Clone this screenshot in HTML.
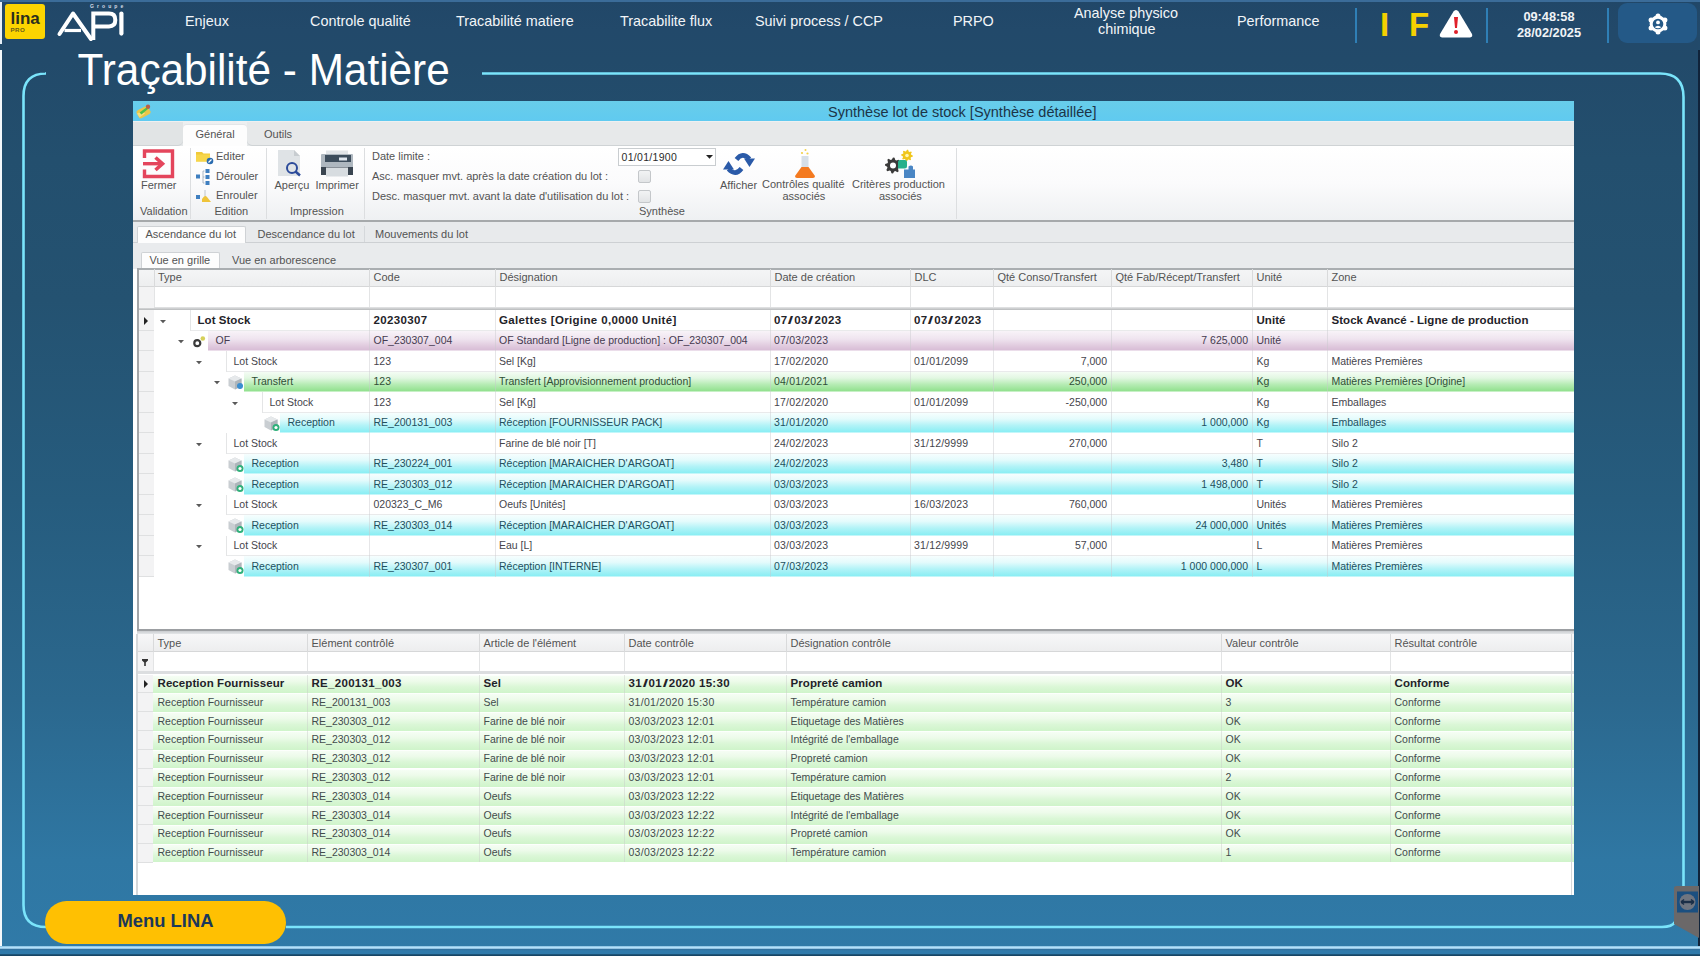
<!DOCTYPE html>
<html><head><meta charset="utf-8">
<style>
*{margin:0;padding:0;box-sizing:border-box}
html,body{width:1700px;height:956px;overflow:hidden}
body{position:relative;font-family:"Liberation Sans",sans-serif;background:linear-gradient(180deg,rgb(33,71,104) 0px,rgb(34,73,106) 30px,rgb(34,74,106) 60px,rgb(35,79,110) 160px,rgb(36,82,113) 300px,rgb(38,92,126) 500px,rgb(43,104,142) 700px,rgb(47,119,163) 860px,rgb(48,122,168) 956px)}
.a{position:absolute;white-space:nowrap}
.nav{color:#f2f5f8;font-size:14.4px;line-height:16px}
.sep{position:absolute;top:8px;width:2px;height:35px;background:#2f7fb6}
#win{position:absolute;left:133px;top:101px;width:1441px;height:793px;background:#fff;overflow:hidden}
.rb{font-size:11px;color:#3c3c3c;line-height:13px}
.hdr{font-size:11px;color:#3a3a3a;line-height:13px}
.c{font-size:10.5px;color:#2e2e2e;line-height:13px}
.b{font-size:11.5px;font-weight:bold;color:#262626;line-height:13px}
</style></head>
<body>
<!-- left white strip -->
<div class="a" style="left:0;top:0;width:2px;height:44px;background:#e8f0f8"></div>
<div class="a" style="left:0;top:50px;width:2px;height:897px;background:#f4f8fb"></div>
<!-- top light strip -->
<div class="a" style="left:0;top:0;width:1700px;height:2px;background:#3b6c99"></div>
<!-- right dark edge -->
<div class="a" style="left:1698px;top:50px;width:2px;height:906px;background:#10233a"></div>

<!-- lina logo -->
<div class="a" style="left:5px;top:4px;width:40px;height:35px;background:#fcd400;border-radius:3px"></div>
<div class="a" style="left:10.5px;top:10px;font-size:17px;font-weight:bold;color:#2b2e1e;line-height:17px">lina</div>
<div class="a" style="left:10.5px;top:26.5px;font-size:6.2px;font-weight:bold;color:#6b5f1a;line-height:6px;letter-spacing:0.4px">PRO</div>
<!-- API logo -->
<div class="a" style="left:90px;top:3px;font-size:5px;font-weight:bold;color:#d5dde6;letter-spacing:3.1px;line-height:6px">Groupe</div>
<svg class="a" style="left:0;top:0" width="130" height="48" viewBox="0 0 130 48">
 <path d="M59.5 34 L73 13.5 L91 39" fill="none" stroke="#fff" stroke-width="4" stroke-linejoin="round" stroke-linecap="round"/>
 <path d="M64.5 30.5 L81 30.5" fill="none" stroke="#fff" stroke-width="3.2"/>
 <path d="M93.3 40 L93.3 13.6 L109 13.6 Q115.3 13.6 115.3 20 Q115.3 26.4 109 26.4 L95 26.4" fill="none" stroke="#fff" stroke-width="4"/>
 <path d="M121.4 13.6 L121.4 33.6" fill="none" stroke="#fff" stroke-width="4.2" stroke-linecap="round"/>
</svg>

<!-- nav items -->
<div class="a nav" style="left:185px;top:13px">Enjeux</div>
<div class="a nav" style="left:310px;top:13px">Controle qualité</div>
<div class="a nav" style="left:456px;top:13px">Tracabilité matiere</div>
<div class="a nav" style="left:620px;top:13px">Tracabilite flux</div>
<div class="a nav" style="left:755px;top:13px">Suivi process / CCP</div>
<div class="a nav" style="left:953px;top:13px">PRPO</div>
<div class="a nav" style="left:1074px;top:5px">Analyse physico</div>
<div class="a nav" style="left:1098px;top:21px">chimique</div>
<div class="a nav" style="left:1237px;top:13px">Performance</div>
<div class="sep" style="left:1355px"></div>
<div class="a" style="left:1380px;top:8px;font-size:33px;font-weight:bold;color:#f5d000;line-height:34px">I</div>
<div class="a" style="left:1409px;top:8px;font-size:33px;font-weight:bold;color:#f5d000;line-height:34px">F</div>
<svg class="a" style="left:1438px;top:8px" width="36" height="31" viewBox="0 0 36 31">
 <path d="M18 2 Q19.5 2 20.5 3.5 L34 26 Q35 29 32 29.5 L4 29.5 Q1 29 2 26 L15.5 3.5 Q16.5 2 18 2Z" fill="#fff"/>
 <path d="M16 9 L20 9 L19 20 L17 20Z" fill="#e0202a"/>
 <circle cx="18" cy="24" r="2" fill="#e0202a"/>
</svg>
<div class="sep" style="left:1486px"></div>
<div class="a" style="left:1517px;top:9px;width:64px;text-align:center;font-size:12.8px;font-weight:bold;color:#f0f3f6;line-height:16px">09:48:58<br>28/02/2025</div>
<div class="sep" style="left:1607px"></div>
<div class="a" style="left:1618px;top:3px;width:79px;height:40px;background:#245987;border-radius:9px"></div>
<svg class="a" style="left:1646.5px;top:13px" width="22" height="22" viewBox="0 0 22 22">
 <circle cx="11" cy="11" r="8.4" fill="#fff"/><circle cx="11.00" cy="3.00" r="2.5" fill="#fff"/><circle cx="17.93" cy="7.00" r="2.5" fill="#fff"/><circle cx="17.93" cy="15.00" r="2.5" fill="#fff"/><circle cx="11.00" cy="19.00" r="2.5" fill="#fff"/><circle cx="4.07" cy="15.00" r="2.5" fill="#fff"/><circle cx="4.07" cy="7.00" r="2.5" fill="#fff"/>
 <circle cx="11" cy="11" r="5.3" fill="#245987"/>
 <circle cx="11" cy="9.4" r="1.9" fill="#fff"/>
 <path d="M7.6 14.3 Q11 11.2 14.4 14.3 Q11 16 7.6 14.3Z" fill="#fff"/>
</svg>

<!-- cyan frame -->
<svg class="a" style="left:0;top:0" width="1700" height="956">
 <path d="M45 73.5 L46 73.5 Q23.5 73.5 23.5 96 L23.5 905 Q23.5 927 46 927" fill="none" stroke="#7ae4fb" stroke-width="2.6"/>
 <path d="M482 73.5 L1660 73.5 Q1683.5 73.5 1683.5 97 L1683.5 886" fill="none" stroke="#7ae4fb" stroke-width="2.6"/>
 <path d="M286 927 L1662 927 Q1672 927 1675 922" fill="none" stroke="#7ae4fb" stroke-width="2.6"/>
</svg>

<!-- title -->
<div class="a" style="left:77.5px;top:47px;font-size:42.3px;color:#fff;line-height:48px;transform:scaleY(1.035);transform-origin:0 38px">Traçabilité - Matière</div>

<div class="a" style="left:133px;top:101px;width:1441px;height:793.5px;background:#fff;"></div>
<div class="a" style="left:133px;top:101px;width:1441px;height:20px;background:linear-gradient(180deg,#68cdea,#60caf0);"></div>
<svg class="a" style="left:135px;top:103px" width="17" height="17" viewBox="0 0 17 17">
<path d="M1.5 10 Q1 8 3 7 L10 3.5 Q12 3 13 4.5 L15.5 8.5 Q16 10 14.5 11 L7 15 Q5 16 4 14.5Z" fill="#e9c648"/>
<path d="M2 10.5 L7.5 8 L10 10.5 L4.5 14.5Z" fill="#f6de7a"/>
<path d="M4.5 9.5 L11.5 4.5 L13 6 L6.5 11.5Z" fill="#4cc04a"/>
<circle cx="13" cy="3.8" r="2.2" fill="#b86048"/>
</svg>
<div class="a" style="left:828px;top:104.53px;font-size:14.5px;line-height:14.5px;color:#1c3447;">Synthèse lot de stock [Synthèse détaillée]</div>
<div class="a" style="left:133px;top:121px;width:1441px;height:25px;background:linear-gradient(180deg,#eef0f1,#e5e8e9);"></div>
<div class="a" style="left:133px;top:122px;width:50px;height:23px;background:#e1e4e5;border-radius:0 0 5px 0;box-shadow:0 1px 0 #cfd3d5"></div>
<div class="a" style="left:247px;top:122px;width:1327px;height:23px;background:#e7e9ea;border-radius:0 0 0 5px;box-shadow:0 1px 0 #cfd3d5"></div>
<div class="a" style="left:183px;top:125px;width:64px;height:22px;background:#fdfdfd;border-radius:4px 4px 0 0;box-shadow:0 -1px 0 #e4e6e8"></div>
<div class="a" style="left:195.5px;top:129.19px;font-size:11px;line-height:11px;color:#535353;">Général</div>
<div class="a" style="left:264px;top:129.19px;font-size:11px;line-height:11px;color:#535353;">Outils</div>
<div class="a" style="left:133px;top:146px;width:1441px;height:75px;background:linear-gradient(180deg,#ffffff 0%,#fbfbfc 50%,#eef0f2 100%);"></div>
<div class="a" style="left:133px;top:220px;width:1441px;height:2px;background:#a6a9ab;"></div>
<div class="a" style="left:190px;top:148px;width:1px;height:71px;background:#dcdee0;"></div>
<div class="a" style="left:266px;top:148px;width:1px;height:71px;background:#dcdee0;"></div>
<div class="a" style="left:364px;top:148px;width:1px;height:71px;background:#dcdee0;"></div>
<div class="a" style="left:956px;top:148px;width:1px;height:71px;background:#dcdee0;"></div>
<svg class="a" style="left:142px;top:149px" width="33" height="30" viewBox="0 0 33 30">
<path d="M2.5 9 L2.5 2 L30.5 2 L30.5 27.5 L2.5 27.5 L2.5 20.5" fill="none" stroke="#e4455c" stroke-width="3.4"/>
<path d="M1 14.7 L19 14.7" stroke="#e4455c" stroke-width="3.4"/>
<path d="M13.5 8.5 L20.5 14.7 L13.5 21" fill="none" stroke="#e4455c" stroke-width="3.6"/>
</svg>
<div class="a" style="left:141px;top:180.19px;font-size:11px;line-height:11px;color:#535353;">Fermer</div>
<div class="a" style="left:140px;top:205.99px;font-size:11px;line-height:11px;color:#535353;">Validation</div>
<svg class="a" style="left:195px;top:150px" width="20" height="15" viewBox="0 0 20 15">
<path d="M1 2 L7 2 L8.5 3.5 L15 3.5 L15 11.5 L1 11.5Z" fill="#f0c93a"/>
<path d="M1 4.5 L15 4.5 L15 11.5 L1 11.5Z" fill="#f7d64a"/>
<circle cx="15" cy="11" r="3.3" fill="#2a6cb0"/>
<path d="M13.5 12.5 L16.5 9.5" stroke="#fff" stroke-width="1.2"/>
</svg>
<div class="a" style="left:216px;top:150.69px;font-size:11px;line-height:11px;color:#535353;">Editer</div>
<svg class="a" style="left:195px;top:168px" width="20" height="18" viewBox="0 0 20 18">
<rect x="1" y="6.5" width="4" height="4" fill="#3f7fc0"/>
<path d="M9.5 3 L8 3 L8 15 L9.5 15 M8 9 L9.5 9" fill="none" stroke="#9aa8b8" stroke-width="0.8"/>
<rect x="10.5" y="1" width="4" height="4" fill="#3f7fc0"/>
<rect x="10.5" y="7" width="4" height="4" fill="#3f7fc0"/>
<rect x="10.5" y="13" width="4" height="4" fill="#3f7fc0"/>
</svg>
<div class="a" style="left:216px;top:170.69px;font-size:11px;line-height:11px;color:#535353;">Dérouler</div>
<svg class="a" style="left:195px;top:189px" width="20" height="16" viewBox="0 0 20 16">
<rect x="1" y="6" width="4" height="4" fill="#3f7fc0"/>
<path d="M10 1 L10 8" stroke="#b0b8c0" stroke-width="0.8"/>
<path d="M7 10 Q10 5 12 8 L16 13 L7 13Z" fill="#efc43a"/>
</svg>
<div class="a" style="left:216px;top:189.99px;font-size:11px;line-height:11px;color:#535353;">Enrouler</div>
<div class="a" style="left:214.5px;top:205.69px;font-size:11px;line-height:11px;color:#535353;">Edition</div>
<svg class="a" style="left:276px;top:149px" width="28" height="30" viewBox="0 0 28 30">
<path d="M2 1 L18 1 L24 7 L24 27 L2 27Z" fill="#dfe3e6"/>
<path d="M18 1 L24 7 L18 7Z" fill="#c7ccd0"/>
<circle cx="16" cy="19" r="5" fill="none" stroke="#2b4a9a" stroke-width="2"/>
<path d="M19.5 22.5 L24 26.5" stroke="#2b4a9a" stroke-width="2.4"/>
</svg>
<svg class="a" style="left:320px;top:150px" width="34" height="28" viewBox="0 0 34 28">
<rect x="6" y="0.5" width="22" height="5" fill="#e2e5e8"/>
<rect x="1" y="4" width="32" height="19" rx="1" fill="#aeb7bf"/>
<rect x="5" y="5" width="26" height="7" fill="#3d4d5c"/>
<rect x="19" y="7.5" width="8" height="3" fill="#dfe6ee"/>
<rect x="1" y="17" width="32" height="8" fill="#3a4550"/>
<rect x="6" y="17.5" width="22" height="9" fill="#d7dce0"/>
</svg>
<div class="a" style="left:274.5px;top:180.09px;font-size:11px;line-height:11px;color:#535353;">Aperçu</div>
<div class="a" style="left:315.5px;top:180.09px;font-size:11px;line-height:11px;color:#535353;">Imprimer</div>
<div class="a" style="left:290px;top:205.69px;font-size:11px;line-height:11px;color:#535353;">Impression</div>
<div class="a" style="left:372px;top:151.19px;font-size:11px;line-height:11px;color:#535353;">Date limite :</div>
<div class="a" style="left:372px;top:170.69px;font-size:11px;line-height:11px;color:#535353;">Asc. masquer mvt. après la date création du lot :</div>
<div class="a" style="left:372px;top:190.69px;font-size:11px;line-height:11px;color:#535353;">Desc. masquer mvt. avant la date d'utilisation du lot :</div>
<div class="a" style="left:618px;top:148px;width:98px;height:18px;background:#fff;border:1px solid #c9cdd0"></div>
<div class="a" style="left:621.5px;top:151.61px;font-size:10.5px;line-height:10.5px;color:#2a2a2a;letter-spacing:0.3px;">01/01/1900</div>
<svg class="a" style="left:705.5px;top:155px" width="7" height="4" viewBox="0 0 7 4"><path d="M0 0 L7 0 L3.5 3.8Z" fill="#222"/></svg>
<div class="a" style="left:638px;top:170px;width:13px;height:13px;background:linear-gradient(180deg,#f2f3f4,#e2e4e6);border:1px solid #c4c7ca;border-radius:2px"></div>
<div class="a" style="left:638px;top:190px;width:13px;height:13px;background:linear-gradient(180deg,#f2f3f4,#e2e4e6);border:1px solid #c4c7ca;border-radius:2px"></div>
<div class="a" style="left:639px;top:206.29px;font-size:11px;line-height:11px;color:#535353;">Synthèse</div>
<svg class="a" style="left:723px;top:151px" width="32" height="26" viewBox="0 0 32 26">
<path d="M13.5 8.5 Q19.5 0.5 26.5 8" fill="none" stroke="#2a5aa8" stroke-width="4.6"/>
<path d="M21 7.5 L32 7.5 L26.5 16Z" fill="#2a5aa8"/>
<path d="M18.5 17.5 Q12.5 25.5 5.5 18" fill="none" stroke="#2a5aa8" stroke-width="4.6"/>
<path d="M0 18.5 L11 18.5 L5.5 10Z" fill="#2a5aa8"/>
</svg>
<div class="a" style="left:720px;top:180.39px;font-size:11px;line-height:11px;color:#535353;">Afficher</div>
<svg class="a" style="left:793px;top:148px" width="24" height="31" viewBox="0 0 24 31">
<circle cx="12.5" cy="2" r="1" fill="#f2d24a"/><circle cx="9" cy="5" r="1.1" fill="#f2d24a"/><circle cx="14.5" cy="5.5" r="1.1" fill="#f2d24a"/>
<rect x="8.5" y="8" width="7" height="13" fill="#d6dfe8"/>
<path d="M8.5 19 L15.5 19 L22 28 Q22 30 20 30 L4 30 Q2 30 2 28Z" fill="#f47a20"/>
</svg>
<div class="a" style="left:762px;top:179.49px;font-size:11px;line-height:11px;color:#535353;">Contrôles qualité</div>
<div class="a" style="left:782.5px;top:190.99px;font-size:11px;line-height:11px;color:#535353;">associés</div>
<svg class="a" style="left:884px;top:149px" width="34" height="30" viewBox="0 0 34 30">
<polygon points="17.00,16.50 16.85,18.06 14.54,18.80 13.99,19.83 14.66,22.16 13.44,23.15 11.30,22.04 10.17,22.38 9.00,24.50 7.44,24.35 6.70,22.04 5.67,21.49 3.34,22.16 2.35,20.94 3.46,18.80 3.12,17.67 1.00,16.50 1.15,14.94 3.46,14.20 4.01,13.17 3.34,10.84 4.56,9.85 6.70,10.96 7.83,10.62 9.00,8.50 10.56,8.65 11.30,10.96 12.33,11.51 14.66,10.84 15.65,12.06 14.54,14.20 14.88,15.33" fill="#3a3a3a"/><circle cx="9" cy="16.5" r="3" fill="#fff"/>
<polygon points="28.80,6.50 28.69,7.63 26.97,8.15 26.58,8.89 27.10,10.60 26.22,11.32 24.65,10.47 23.84,10.72 23.00,12.30 21.87,12.19 21.35,10.47 20.61,10.08 18.90,10.60 18.18,9.72 19.03,8.15 18.78,7.34 17.20,6.50 17.31,5.37 19.03,4.85 19.42,4.11 18.90,2.40 19.78,1.68 21.35,2.53 22.16,2.28 23.00,0.70 24.13,0.81 24.65,2.53 25.39,2.92 27.10,2.40 27.82,3.28 26.97,4.85 27.22,5.66" fill="#f0c61c"/><circle cx="23" cy="6.5" r="1.8" fill="#fff6b0"/>
<path d="M14 12.5 Q14 11 16 11 L21 11 Q23 11 23 13 L23 17 Q23 19.5 20.5 19.5 L14 19.5Z" fill="#27b08a"/>
<path d="M20 20.5 L24.5 20.5 L24.5 17.5 Q27 15.5 29 17.5 L29 20.5 L31 20.5 L31 29 L20 29Z" fill="#4a86c4"/>
</svg>
<div class="a" style="left:852px;top:179.49px;font-size:11px;line-height:11px;color:#535353;">Critères production</div>
<div class="a" style="left:879px;top:190.99px;font-size:11px;line-height:11px;color:#535353;">associés</div>
<div class="a" style="left:133px;top:222px;width:1441px;height:21px;background:#e8eaec;"></div>
<div class="a" style="left:133px;top:242px;width:1441px;height:1px;background:#cdd0d3;"></div>
<div class="a" style="left:137px;top:226px;width:109px;height:17px;background:#fdfdfd;border:1px solid #cfd2d5;border-bottom:none;border-radius:2px 2px 0 0"></div>
<div class="a" style="left:145.5px;top:229.39px;font-size:11px;line-height:11px;color:#535353;">Ascendance du lot</div>
<div class="a" style="left:257.5px;top:229.39px;font-size:11px;line-height:11px;color:#535353;">Descendance du lot</div>
<div class="a" style="left:364px;top:226px;width:1px;height:16px;background:#d5d8db;"></div>
<div class="a" style="left:375px;top:229.39px;font-size:11px;line-height:11px;color:#535353;">Mouvements du lot</div>
<div class="a" style="left:133px;top:243px;width:1441px;height:26px;background:#e9ebed;"></div>
<div class="a" style="left:141px;top:252px;width:79px;height:17px;background:#fdfdfd;border:1px solid #cfd2d5;border-bottom:none;border-radius:2px 2px 0 0"></div>
<div class="a" style="left:149.5px;top:255.09px;font-size:11px;line-height:11px;color:#535353;">Vue en grille</div>
<div class="a" style="left:232px;top:255.09px;font-size:11px;line-height:11px;color:#535353;">Vue en arborescence</div>
<div class="a" style="left:137px;top:268px;width:1437px;height:361px;background:#fff;"></div>
<div class="a" style="left:137px;top:268px;width:1437px;height:2px;background:#aaaeb1;"></div>
<div class="a" style="left:137px;top:268px;width:2px;height:361px;background:#a3a6a9;"></div>
<div class="a" style="left:139px;top:270px;width:1435px;height:17px;background:linear-gradient(180deg,#f4f5f6,#edeeef);"></div>
<div class="a" style="left:139px;top:286px;width:1435px;height:1px;background:#d6d7d8;"></div>
<div class="a" style="left:153.5px;top:269px;width:1px;height:18px;background:#d9dadb;"></div>
<div class="a" style="left:369px;top:269px;width:1px;height:18px;background:#d9dadb;"></div>
<div class="a" style="left:495px;top:269px;width:1px;height:18px;background:#d9dadb;"></div>
<div class="a" style="left:770px;top:269px;width:1px;height:18px;background:#d9dadb;"></div>
<div class="a" style="left:910px;top:269px;width:1px;height:18px;background:#d9dadb;"></div>
<div class="a" style="left:993px;top:269px;width:1px;height:18px;background:#d9dadb;"></div>
<div class="a" style="left:1111px;top:269px;width:1px;height:18px;background:#d9dadb;"></div>
<div class="a" style="left:1252px;top:269px;width:1px;height:18px;background:#d9dadb;"></div>
<div class="a" style="left:1327px;top:269px;width:1px;height:18px;background:#d9dadb;"></div>
<div class="a" style="left:158.0px;top:271.69px;font-size:11px;line-height:11px;color:#535353;">Type</div>
<div class="a" style="left:373.5px;top:271.69px;font-size:11px;line-height:11px;color:#535353;">Code</div>
<div class="a" style="left:499.5px;top:271.69px;font-size:11px;line-height:11px;color:#535353;">Désignation</div>
<div class="a" style="left:774.5px;top:271.69px;font-size:11px;line-height:11px;color:#535353;">Date de création</div>
<div class="a" style="left:914.5px;top:271.69px;font-size:11px;line-height:11px;color:#535353;">DLC</div>
<div class="a" style="left:997.5px;top:271.69px;font-size:11px;line-height:11px;color:#535353;">Qté Conso/Transfert</div>
<div class="a" style="left:1115.5px;top:271.69px;font-size:11px;line-height:11px;color:#535353;">Qté Fab/Récept/Transfert</div>
<div class="a" style="left:1256.5px;top:271.69px;font-size:11px;line-height:11px;color:#535353;">Unité</div>
<div class="a" style="left:1331.5px;top:271.69px;font-size:11px;line-height:11px;color:#535353;">Zone</div>
<div class="a" style="left:153.5px;top:287px;width:1px;height:22px;background:#e3e4e5;"></div>
<div class="a" style="left:369px;top:287px;width:1px;height:22px;background:#e3e4e5;"></div>
<div class="a" style="left:495px;top:287px;width:1px;height:22px;background:#e3e4e5;"></div>
<div class="a" style="left:770px;top:287px;width:1px;height:22px;background:#e3e4e5;"></div>
<div class="a" style="left:910px;top:287px;width:1px;height:22px;background:#e3e4e5;"></div>
<div class="a" style="left:993px;top:287px;width:1px;height:22px;background:#e3e4e5;"></div>
<div class="a" style="left:1111px;top:287px;width:1px;height:22px;background:#e3e4e5;"></div>
<div class="a" style="left:1252px;top:287px;width:1px;height:22px;background:#e3e4e5;"></div>
<div class="a" style="left:1327px;top:287px;width:1px;height:22px;background:#e3e4e5;"></div>
<div class="a" style="left:139px;top:307px;width:1435px;height:3px;background:linear-gradient(180deg,#e6e7e8,#b7b9bb);"></div>
<div class="a" style="left:139px;top:287px;width:14.5px;height:21px;background:#f3f3f4;"></div>
<div class="a" style="left:139px;top:310.0px;width:14.5px;height:20.5px;background:#f3f3f4;"></div>
<div class="a" style="left:139px;top:329.5px;width:14.5px;height:1px;background:#dfe0e1;"></div>
<div class="a" style="left:190px;top:310.0px;width:1384px;height:20.5px;background:#ffffff;"></div>
<div class="a" style="left:190px;top:329.5px;width:1384px;height:1px;background:#e9eaeb;"></div>
<div class="a" style="left:190px;top:310.0px;width:1px;height:20.5px;background:#e4e5e6;"></div>
<div class="a" style="left:369px;top:310.0px;width:1px;height:20.5px;background:rgba(200,200,205,0.45);"></div>
<div class="a" style="left:495px;top:310.0px;width:1px;height:20.5px;background:rgba(200,200,205,0.45);"></div>
<div class="a" style="left:770px;top:310.0px;width:1px;height:20.5px;background:rgba(200,200,205,0.45);"></div>
<div class="a" style="left:910px;top:310.0px;width:1px;height:20.5px;background:rgba(200,200,205,0.45);"></div>
<div class="a" style="left:993px;top:310.0px;width:1px;height:20.5px;background:rgba(200,200,205,0.45);"></div>
<div class="a" style="left:1111px;top:310.0px;width:1px;height:20.5px;background:rgba(200,200,205,0.45);"></div>
<div class="a" style="left:1252px;top:310.0px;width:1px;height:20.5px;background:rgba(200,200,205,0.45);"></div>
<div class="a" style="left:1327px;top:310.0px;width:1px;height:20.5px;background:rgba(200,200,205,0.45);"></div>
<svg class="a" style="left:143px;top:316.5px" width="6" height="8" viewBox="0 0 6 8"><path d="M1 0 L5 4 L1 8Z" fill="#222"/></svg>
<svg class="a" style="left:160px;top:319.5px" width="6" height="4" viewBox="0 0 6 4"><path d="M0 0 L6 0 L3 3.2Z" fill="#5a5a5a"/></svg>
<div class="a" style="left:197.5px;top:315.07px;font-size:11.5px;line-height:11.5px;color:#1f2329;font-weight:700;letter-spacing:0.05px;">Lot Stock</div>
<div class="a" style="left:373.5px;top:315.07px;font-size:11.5px;line-height:11.5px;color:#1f2329;font-weight:700;letter-spacing:0.35px;">20230307</div>
<div class="a" style="left:499px;top:315.07px;font-size:11.5px;line-height:11.5px;color:#1f2329;font-weight:700;letter-spacing:0.35px;">Galettes [Origine 0,0000 Unité]</div>
<div class="a" style="left:774px;top:315.07px;font-size:11.5px;line-height:11.5px;color:#1f2329;font-weight:700;letter-spacing:0.35px;">07<span style="display:inline-block;margin:0 1.6px;transform:scaleX(1.7)">/</span>03<span style="display:inline-block;margin:0 1.6px;transform:scaleX(1.7)">/</span>2023</div>
<div class="a" style="left:914px;top:315.07px;font-size:11.5px;line-height:11.5px;color:#1f2329;font-weight:700;letter-spacing:0.35px;">07<span style="display:inline-block;margin:0 1.6px;transform:scaleX(1.7)">/</span>03<span style="display:inline-block;margin:0 1.6px;transform:scaleX(1.7)">/</span>2023</div>
<div class="a" style="left:1256.5px;top:315.07px;font-size:11.5px;line-height:11.5px;color:#1f2329;font-weight:700;letter-spacing:0.05px;">Unité</div>
<div class="a" style="left:1331.5px;top:315.07px;font-size:11.5px;line-height:11.5px;color:#1f2329;font-weight:700;letter-spacing:0.05px;">Stock Avancé - Ligne de production</div>
<div class="a" style="left:139px;top:330.5px;width:14.5px;height:20.5px;background:#f3f3f4;"></div>
<div class="a" style="left:139px;top:350.0px;width:14.5px;height:1px;background:#dfe0e1;"></div>
<div class="a" style="left:208px;top:330.5px;width:1366px;height:20.5px;background:linear-gradient(180deg,#f8f3f8 0%,#efe4ef 40%,#e0cade 75%,#d6bad4 100%);"></div>
<div class="a" style="left:208px;top:350.0px;width:1366px;height:1px;background:rgba(255,255,255,0.5);"></div>
<div class="a" style="left:369px;top:330.5px;width:1px;height:20.5px;background:rgba(200,200,205,0.45);"></div>
<div class="a" style="left:495px;top:330.5px;width:1px;height:20.5px;background:rgba(200,200,205,0.45);"></div>
<div class="a" style="left:770px;top:330.5px;width:1px;height:20.5px;background:rgba(200,200,205,0.45);"></div>
<div class="a" style="left:910px;top:330.5px;width:1px;height:20.5px;background:rgba(200,200,205,0.45);"></div>
<div class="a" style="left:993px;top:330.5px;width:1px;height:20.5px;background:rgba(200,200,205,0.45);"></div>
<div class="a" style="left:1111px;top:330.5px;width:1px;height:20.5px;background:rgba(200,200,205,0.45);"></div>
<div class="a" style="left:1252px;top:330.5px;width:1px;height:20.5px;background:rgba(200,200,205,0.45);"></div>
<div class="a" style="left:1327px;top:330.5px;width:1px;height:20.5px;background:rgba(200,200,205,0.45);"></div>
<svg class="a" style="left:178px;top:340.0px" width="6" height="4" viewBox="0 0 6 4"><path d="M0 0 L6 0 L3 3.2Z" fill="#5a5a5a"/></svg>
<svg class="a" style="left:192px;top:333.5px" width="16" height="15" viewBox="0 0 16 15">
<circle cx="5.3" cy="9.2" r="3" fill="none" stroke="#3a3a3a" stroke-width="2.2"/>
<circle cx="10.8" cy="4.5" r="2.3" fill="#d6d05a"/></svg>
<div class="a" style="left:215.5px;top:335.41px;font-size:10.5px;line-height:10.5px;color:#453a50;">OF</div>
<div class="a" style="left:373.5px;top:335.41px;font-size:10.5px;line-height:10.5px;color:#453a50;">OF_230307_004</div>
<div class="a" style="left:499px;top:335.41px;font-size:10.5px;line-height:10.5px;color:#453a50;">OF Standard [Ligne de production] : OF_230307_004</div>
<div class="a" style="left:774px;top:335.41px;font-size:10.5px;line-height:10.5px;color:#453a50;letter-spacing:0.18px;">07/03/2023</div>
<div class="a" style="left:1113px;width:135px;text-align:right;top:335.41px;font-size:10.5px;line-height:10.5px;color:#453a50;">7 625,000</div>
<div class="a" style="left:1256.5px;top:335.41px;font-size:10.5px;line-height:10.5px;color:#453a50;">Unité</div>
<div class="a" style="left:139px;top:351.0px;width:14.5px;height:20.5px;background:#f3f3f4;"></div>
<div class="a" style="left:139px;top:370.5px;width:14.5px;height:1px;background:#dfe0e1;"></div>
<div class="a" style="left:226px;top:351.0px;width:1348px;height:20.5px;background:#ffffff;"></div>
<div class="a" style="left:226px;top:370.5px;width:1348px;height:1px;background:#e9eaeb;"></div>
<div class="a" style="left:226px;top:351.0px;width:1px;height:20.5px;background:#e4e5e6;"></div>
<div class="a" style="left:369px;top:351.0px;width:1px;height:20.5px;background:rgba(200,200,205,0.45);"></div>
<div class="a" style="left:495px;top:351.0px;width:1px;height:20.5px;background:rgba(200,200,205,0.45);"></div>
<div class="a" style="left:770px;top:351.0px;width:1px;height:20.5px;background:rgba(200,200,205,0.45);"></div>
<div class="a" style="left:910px;top:351.0px;width:1px;height:20.5px;background:rgba(200,200,205,0.45);"></div>
<div class="a" style="left:993px;top:351.0px;width:1px;height:20.5px;background:rgba(200,200,205,0.45);"></div>
<div class="a" style="left:1111px;top:351.0px;width:1px;height:20.5px;background:rgba(200,200,205,0.45);"></div>
<div class="a" style="left:1252px;top:351.0px;width:1px;height:20.5px;background:rgba(200,200,205,0.45);"></div>
<div class="a" style="left:1327px;top:351.0px;width:1px;height:20.5px;background:rgba(200,200,205,0.45);"></div>
<svg class="a" style="left:196px;top:360.5px" width="6" height="4" viewBox="0 0 6 4"><path d="M0 0 L6 0 L3 3.2Z" fill="#5a5a5a"/></svg>
<div class="a" style="left:233.5px;top:355.91px;font-size:10.5px;line-height:10.5px;color:#45454c;">Lot Stock</div>
<div class="a" style="left:373.5px;top:355.91px;font-size:10.5px;line-height:10.5px;color:#45454c;">123</div>
<div class="a" style="left:499px;top:355.91px;font-size:10.5px;line-height:10.5px;color:#45454c;">Sel [Kg]</div>
<div class="a" style="left:774px;top:355.91px;font-size:10.5px;line-height:10.5px;color:#45454c;letter-spacing:0.18px;">17/02/2020</div>
<div class="a" style="left:914px;top:355.91px;font-size:10.5px;line-height:10.5px;color:#45454c;letter-spacing:0.18px;">01/01/2099</div>
<div class="a" style="left:995px;width:112px;text-align:right;top:355.91px;font-size:10.5px;line-height:10.5px;color:#45454c;">7,000</div>
<div class="a" style="left:1256.5px;top:355.91px;font-size:10.5px;line-height:10.5px;color:#45454c;">Kg</div>
<div class="a" style="left:1331.5px;top:355.91px;font-size:10.5px;line-height:10.5px;color:#45454c;">Matières Premières</div>
<div class="a" style="left:139px;top:371.5px;width:14.5px;height:20.5px;background:#f3f3f4;"></div>
<div class="a" style="left:139px;top:391.0px;width:14.5px;height:1px;background:#dfe0e1;"></div>
<div class="a" style="left:244px;top:371.5px;width:1330px;height:20.5px;background:linear-gradient(180deg,#f4fcf4 0%,#e2f7e2 30%,#b6ecb4 62%,#8cdf89 100%);"></div>
<div class="a" style="left:244px;top:391.0px;width:1330px;height:1px;background:rgba(255,255,255,0.5);"></div>
<div class="a" style="left:369px;top:371.5px;width:1px;height:20.5px;background:rgba(200,200,205,0.45);"></div>
<div class="a" style="left:495px;top:371.5px;width:1px;height:20.5px;background:rgba(200,200,205,0.45);"></div>
<div class="a" style="left:770px;top:371.5px;width:1px;height:20.5px;background:rgba(200,200,205,0.45);"></div>
<div class="a" style="left:910px;top:371.5px;width:1px;height:20.5px;background:rgba(200,200,205,0.45);"></div>
<div class="a" style="left:993px;top:371.5px;width:1px;height:20.5px;background:rgba(200,200,205,0.45);"></div>
<div class="a" style="left:1111px;top:371.5px;width:1px;height:20.5px;background:rgba(200,200,205,0.45);"></div>
<div class="a" style="left:1252px;top:371.5px;width:1px;height:20.5px;background:rgba(200,200,205,0.45);"></div>
<div class="a" style="left:1327px;top:371.5px;width:1px;height:20.5px;background:rgba(200,200,205,0.45);"></div>
<svg class="a" style="left:214px;top:381.0px" width="6" height="4" viewBox="0 0 6 4"><path d="M0 0 L6 0 L3 3.2Z" fill="#5a5a5a"/></svg>
<svg class="a" style="left:227px;top:373.5px" width="17" height="17" viewBox="0 0 17 17">
<path d="M8 1.5 L14.5 4.5 L14.5 12 L8 15.5 L1.5 12 L1.5 4.5Z" fill="#c9ced2"/>
<path d="M8 1.5 L14.5 4.5 L8 7.5 L1.5 4.5Z" fill="#e6e9eb"/>
<path d="M8 7.5 L14.5 4.5 L14.5 12 L8 15.5Z" fill="#aeb5ba"/>
<path d="M10 11 L16 11 L13 15Z" fill="#3a8ed0"/><circle cx="13" cy="12" r="3" fill="#3a8ed0"/></svg>
<div class="a" style="left:251.5px;top:376.41px;font-size:10.5px;line-height:10.5px;color:#304e36;">Transfert</div>
<div class="a" style="left:373.5px;top:376.41px;font-size:10.5px;line-height:10.5px;color:#304e36;">123</div>
<div class="a" style="left:499px;top:376.41px;font-size:10.5px;line-height:10.5px;color:#304e36;">Transfert [Approvisionnement production]</div>
<div class="a" style="left:774px;top:376.41px;font-size:10.5px;line-height:10.5px;color:#304e36;letter-spacing:0.18px;">04/01/2021</div>
<div class="a" style="left:995px;width:112px;text-align:right;top:376.41px;font-size:10.5px;line-height:10.5px;color:#304e36;">250,000</div>
<div class="a" style="left:1256.5px;top:376.41px;font-size:10.5px;line-height:10.5px;color:#304e36;">Kg</div>
<div class="a" style="left:1331.5px;top:376.41px;font-size:10.5px;line-height:10.5px;color:#304e36;">Matières Premières [Origine]</div>
<div class="a" style="left:139px;top:392.0px;width:14.5px;height:20.5px;background:#f3f3f4;"></div>
<div class="a" style="left:139px;top:411.5px;width:14.5px;height:1px;background:#dfe0e1;"></div>
<div class="a" style="left:262px;top:392.0px;width:1312px;height:20.5px;background:#ffffff;"></div>
<div class="a" style="left:262px;top:411.5px;width:1312px;height:1px;background:#e9eaeb;"></div>
<div class="a" style="left:262px;top:392.0px;width:1px;height:20.5px;background:#e4e5e6;"></div>
<div class="a" style="left:369px;top:392.0px;width:1px;height:20.5px;background:rgba(200,200,205,0.45);"></div>
<div class="a" style="left:495px;top:392.0px;width:1px;height:20.5px;background:rgba(200,200,205,0.45);"></div>
<div class="a" style="left:770px;top:392.0px;width:1px;height:20.5px;background:rgba(200,200,205,0.45);"></div>
<div class="a" style="left:910px;top:392.0px;width:1px;height:20.5px;background:rgba(200,200,205,0.45);"></div>
<div class="a" style="left:993px;top:392.0px;width:1px;height:20.5px;background:rgba(200,200,205,0.45);"></div>
<div class="a" style="left:1111px;top:392.0px;width:1px;height:20.5px;background:rgba(200,200,205,0.45);"></div>
<div class="a" style="left:1252px;top:392.0px;width:1px;height:20.5px;background:rgba(200,200,205,0.45);"></div>
<div class="a" style="left:1327px;top:392.0px;width:1px;height:20.5px;background:rgba(200,200,205,0.45);"></div>
<svg class="a" style="left:232px;top:401.5px" width="6" height="4" viewBox="0 0 6 4"><path d="M0 0 L6 0 L3 3.2Z" fill="#5a5a5a"/></svg>
<div class="a" style="left:269.5px;top:396.91px;font-size:10.5px;line-height:10.5px;color:#45454c;">Lot Stock</div>
<div class="a" style="left:373.5px;top:396.91px;font-size:10.5px;line-height:10.5px;color:#45454c;">123</div>
<div class="a" style="left:499px;top:396.91px;font-size:10.5px;line-height:10.5px;color:#45454c;">Sel [Kg]</div>
<div class="a" style="left:774px;top:396.91px;font-size:10.5px;line-height:10.5px;color:#45454c;letter-spacing:0.18px;">17/02/2020</div>
<div class="a" style="left:914px;top:396.91px;font-size:10.5px;line-height:10.5px;color:#45454c;letter-spacing:0.18px;">01/01/2099</div>
<div class="a" style="left:995px;width:112px;text-align:right;top:396.91px;font-size:10.5px;line-height:10.5px;color:#45454c;">-250,000</div>
<div class="a" style="left:1256.5px;top:396.91px;font-size:10.5px;line-height:10.5px;color:#45454c;">Kg</div>
<div class="a" style="left:1331.5px;top:396.91px;font-size:10.5px;line-height:10.5px;color:#45454c;">Emballages</div>
<div class="a" style="left:139px;top:412.5px;width:14.5px;height:20.5px;background:#f3f3f4;"></div>
<div class="a" style="left:139px;top:432.0px;width:14.5px;height:1px;background:#dfe0e1;"></div>
<div class="a" style="left:280px;top:412.5px;width:1294px;height:20.5px;background:linear-gradient(180deg,#f6fefe 0%,#e4fbfc 30%,#b2f3f7 62%,#84edf3 100%);"></div>
<div class="a" style="left:280px;top:432.0px;width:1294px;height:1px;background:rgba(255,255,255,0.5);"></div>
<div class="a" style="left:369px;top:412.5px;width:1px;height:20.5px;background:rgba(200,200,205,0.45);"></div>
<div class="a" style="left:495px;top:412.5px;width:1px;height:20.5px;background:rgba(200,200,205,0.45);"></div>
<div class="a" style="left:770px;top:412.5px;width:1px;height:20.5px;background:rgba(200,200,205,0.45);"></div>
<div class="a" style="left:910px;top:412.5px;width:1px;height:20.5px;background:rgba(200,200,205,0.45);"></div>
<div class="a" style="left:993px;top:412.5px;width:1px;height:20.5px;background:rgba(200,200,205,0.45);"></div>
<div class="a" style="left:1111px;top:412.5px;width:1px;height:20.5px;background:rgba(200,200,205,0.45);"></div>
<div class="a" style="left:1252px;top:412.5px;width:1px;height:20.5px;background:rgba(200,200,205,0.45);"></div>
<div class="a" style="left:1327px;top:412.5px;width:1px;height:20.5px;background:rgba(200,200,205,0.45);"></div>
<svg class="a" style="left:263px;top:414.5px" width="17" height="17" viewBox="0 0 17 17">
<path d="M8 1.5 L14.5 4.5 L14.5 12 L8 15.5 L1.5 12 L1.5 4.5Z" fill="#c9ced2"/>
<path d="M8 1.5 L14.5 4.5 L8 7.5 L1.5 4.5Z" fill="#e6e9eb"/>
<path d="M8 7.5 L14.5 4.5 L14.5 12 L8 15.5Z" fill="#aeb5ba"/>
<circle cx="13" cy="12.5" r="3.5" fill="#2fb07a"/><circle cx="13" cy="12.5" r="1.6" fill="#fff"/></svg>
<div class="a" style="left:287.5px;top:417.41px;font-size:10.5px;line-height:10.5px;color:#22505e;">Reception</div>
<div class="a" style="left:373.5px;top:417.41px;font-size:10.5px;line-height:10.5px;color:#22505e;">RE_200131_003</div>
<div class="a" style="left:499px;top:417.41px;font-size:10.5px;line-height:10.5px;color:#22505e;">Réception [FOURNISSEUR PACK]</div>
<div class="a" style="left:774px;top:417.41px;font-size:10.5px;line-height:10.5px;color:#22505e;letter-spacing:0.18px;">31/01/2020</div>
<div class="a" style="left:1113px;width:135px;text-align:right;top:417.41px;font-size:10.5px;line-height:10.5px;color:#22505e;">1 000,000</div>
<div class="a" style="left:1256.5px;top:417.41px;font-size:10.5px;line-height:10.5px;color:#22505e;">Kg</div>
<div class="a" style="left:1331.5px;top:417.41px;font-size:10.5px;line-height:10.5px;color:#22505e;">Emballages</div>
<div class="a" style="left:139px;top:433.0px;width:14.5px;height:20.5px;background:#f3f3f4;"></div>
<div class="a" style="left:139px;top:452.5px;width:14.5px;height:1px;background:#dfe0e1;"></div>
<div class="a" style="left:226px;top:433.0px;width:1348px;height:20.5px;background:#ffffff;"></div>
<div class="a" style="left:226px;top:452.5px;width:1348px;height:1px;background:#e9eaeb;"></div>
<div class="a" style="left:226px;top:433.0px;width:1px;height:20.5px;background:#e4e5e6;"></div>
<div class="a" style="left:369px;top:433.0px;width:1px;height:20.5px;background:rgba(200,200,205,0.45);"></div>
<div class="a" style="left:495px;top:433.0px;width:1px;height:20.5px;background:rgba(200,200,205,0.45);"></div>
<div class="a" style="left:770px;top:433.0px;width:1px;height:20.5px;background:rgba(200,200,205,0.45);"></div>
<div class="a" style="left:910px;top:433.0px;width:1px;height:20.5px;background:rgba(200,200,205,0.45);"></div>
<div class="a" style="left:993px;top:433.0px;width:1px;height:20.5px;background:rgba(200,200,205,0.45);"></div>
<div class="a" style="left:1111px;top:433.0px;width:1px;height:20.5px;background:rgba(200,200,205,0.45);"></div>
<div class="a" style="left:1252px;top:433.0px;width:1px;height:20.5px;background:rgba(200,200,205,0.45);"></div>
<div class="a" style="left:1327px;top:433.0px;width:1px;height:20.5px;background:rgba(200,200,205,0.45);"></div>
<svg class="a" style="left:196px;top:442.5px" width="6" height="4" viewBox="0 0 6 4"><path d="M0 0 L6 0 L3 3.2Z" fill="#5a5a5a"/></svg>
<div class="a" style="left:233.5px;top:437.91px;font-size:10.5px;line-height:10.5px;color:#45454c;">Lot Stock</div>
<div class="a" style="left:499px;top:437.91px;font-size:10.5px;line-height:10.5px;color:#45454c;">Farine de blé noir [T]</div>
<div class="a" style="left:774px;top:437.91px;font-size:10.5px;line-height:10.5px;color:#45454c;letter-spacing:0.18px;">24/02/2023</div>
<div class="a" style="left:914px;top:437.91px;font-size:10.5px;line-height:10.5px;color:#45454c;letter-spacing:0.18px;">31/12/9999</div>
<div class="a" style="left:995px;width:112px;text-align:right;top:437.91px;font-size:10.5px;line-height:10.5px;color:#45454c;">270,000</div>
<div class="a" style="left:1256.5px;top:437.91px;font-size:10.5px;line-height:10.5px;color:#45454c;">T</div>
<div class="a" style="left:1331.5px;top:437.91px;font-size:10.5px;line-height:10.5px;color:#45454c;">Silo 2</div>
<div class="a" style="left:139px;top:453.5px;width:14.5px;height:20.5px;background:#f3f3f4;"></div>
<div class="a" style="left:139px;top:473.0px;width:14.5px;height:1px;background:#dfe0e1;"></div>
<div class="a" style="left:244px;top:453.5px;width:1330px;height:20.5px;background:linear-gradient(180deg,#f6fefe 0%,#e4fbfc 30%,#b2f3f7 62%,#84edf3 100%);"></div>
<div class="a" style="left:244px;top:473.0px;width:1330px;height:1px;background:rgba(255,255,255,0.5);"></div>
<div class="a" style="left:369px;top:453.5px;width:1px;height:20.5px;background:rgba(200,200,205,0.45);"></div>
<div class="a" style="left:495px;top:453.5px;width:1px;height:20.5px;background:rgba(200,200,205,0.45);"></div>
<div class="a" style="left:770px;top:453.5px;width:1px;height:20.5px;background:rgba(200,200,205,0.45);"></div>
<div class="a" style="left:910px;top:453.5px;width:1px;height:20.5px;background:rgba(200,200,205,0.45);"></div>
<div class="a" style="left:993px;top:453.5px;width:1px;height:20.5px;background:rgba(200,200,205,0.45);"></div>
<div class="a" style="left:1111px;top:453.5px;width:1px;height:20.5px;background:rgba(200,200,205,0.45);"></div>
<div class="a" style="left:1252px;top:453.5px;width:1px;height:20.5px;background:rgba(200,200,205,0.45);"></div>
<div class="a" style="left:1327px;top:453.5px;width:1px;height:20.5px;background:rgba(200,200,205,0.45);"></div>
<svg class="a" style="left:227px;top:455.5px" width="17" height="17" viewBox="0 0 17 17">
<path d="M8 1.5 L14.5 4.5 L14.5 12 L8 15.5 L1.5 12 L1.5 4.5Z" fill="#c9ced2"/>
<path d="M8 1.5 L14.5 4.5 L8 7.5 L1.5 4.5Z" fill="#e6e9eb"/>
<path d="M8 7.5 L14.5 4.5 L14.5 12 L8 15.5Z" fill="#aeb5ba"/>
<circle cx="13" cy="12.5" r="3.5" fill="#2fb07a"/><circle cx="13" cy="12.5" r="1.6" fill="#fff"/></svg>
<div class="a" style="left:251.5px;top:458.41px;font-size:10.5px;line-height:10.5px;color:#22505e;">Reception</div>
<div class="a" style="left:373.5px;top:458.41px;font-size:10.5px;line-height:10.5px;color:#22505e;">RE_230224_001</div>
<div class="a" style="left:499px;top:458.41px;font-size:10.5px;line-height:10.5px;color:#22505e;">Réception [MARAICHER D'ARGOAT]</div>
<div class="a" style="left:774px;top:458.41px;font-size:10.5px;line-height:10.5px;color:#22505e;letter-spacing:0.18px;">24/02/2023</div>
<div class="a" style="left:1113px;width:135px;text-align:right;top:458.41px;font-size:10.5px;line-height:10.5px;color:#22505e;">3,480</div>
<div class="a" style="left:1256.5px;top:458.41px;font-size:10.5px;line-height:10.5px;color:#22505e;">T</div>
<div class="a" style="left:1331.5px;top:458.41px;font-size:10.5px;line-height:10.5px;color:#22505e;">Silo 2</div>
<div class="a" style="left:139px;top:474.0px;width:14.5px;height:20.5px;background:#f3f3f4;"></div>
<div class="a" style="left:139px;top:493.5px;width:14.5px;height:1px;background:#dfe0e1;"></div>
<div class="a" style="left:244px;top:474.0px;width:1330px;height:20.5px;background:linear-gradient(180deg,#f6fefe 0%,#e4fbfc 30%,#b2f3f7 62%,#84edf3 100%);"></div>
<div class="a" style="left:244px;top:493.5px;width:1330px;height:1px;background:rgba(255,255,255,0.5);"></div>
<div class="a" style="left:369px;top:474.0px;width:1px;height:20.5px;background:rgba(200,200,205,0.45);"></div>
<div class="a" style="left:495px;top:474.0px;width:1px;height:20.5px;background:rgba(200,200,205,0.45);"></div>
<div class="a" style="left:770px;top:474.0px;width:1px;height:20.5px;background:rgba(200,200,205,0.45);"></div>
<div class="a" style="left:910px;top:474.0px;width:1px;height:20.5px;background:rgba(200,200,205,0.45);"></div>
<div class="a" style="left:993px;top:474.0px;width:1px;height:20.5px;background:rgba(200,200,205,0.45);"></div>
<div class="a" style="left:1111px;top:474.0px;width:1px;height:20.5px;background:rgba(200,200,205,0.45);"></div>
<div class="a" style="left:1252px;top:474.0px;width:1px;height:20.5px;background:rgba(200,200,205,0.45);"></div>
<div class="a" style="left:1327px;top:474.0px;width:1px;height:20.5px;background:rgba(200,200,205,0.45);"></div>
<svg class="a" style="left:227px;top:476.0px" width="17" height="17" viewBox="0 0 17 17">
<path d="M8 1.5 L14.5 4.5 L14.5 12 L8 15.5 L1.5 12 L1.5 4.5Z" fill="#c9ced2"/>
<path d="M8 1.5 L14.5 4.5 L8 7.5 L1.5 4.5Z" fill="#e6e9eb"/>
<path d="M8 7.5 L14.5 4.5 L14.5 12 L8 15.5Z" fill="#aeb5ba"/>
<circle cx="13" cy="12.5" r="3.5" fill="#2fb07a"/><circle cx="13" cy="12.5" r="1.6" fill="#fff"/></svg>
<div class="a" style="left:251.5px;top:478.91px;font-size:10.5px;line-height:10.5px;color:#22505e;">Reception</div>
<div class="a" style="left:373.5px;top:478.91px;font-size:10.5px;line-height:10.5px;color:#22505e;">RE_230303_012</div>
<div class="a" style="left:499px;top:478.91px;font-size:10.5px;line-height:10.5px;color:#22505e;">Réception [MARAICHER D'ARGOAT]</div>
<div class="a" style="left:774px;top:478.91px;font-size:10.5px;line-height:10.5px;color:#22505e;letter-spacing:0.18px;">03/03/2023</div>
<div class="a" style="left:1113px;width:135px;text-align:right;top:478.91px;font-size:10.5px;line-height:10.5px;color:#22505e;">1 498,000</div>
<div class="a" style="left:1256.5px;top:478.91px;font-size:10.5px;line-height:10.5px;color:#22505e;">T</div>
<div class="a" style="left:1331.5px;top:478.91px;font-size:10.5px;line-height:10.5px;color:#22505e;">Silo 2</div>
<div class="a" style="left:139px;top:494.5px;width:14.5px;height:20.5px;background:#f3f3f4;"></div>
<div class="a" style="left:139px;top:514.0px;width:14.5px;height:1px;background:#dfe0e1;"></div>
<div class="a" style="left:226px;top:494.5px;width:1348px;height:20.5px;background:#ffffff;"></div>
<div class="a" style="left:226px;top:514.0px;width:1348px;height:1px;background:#e9eaeb;"></div>
<div class="a" style="left:226px;top:494.5px;width:1px;height:20.5px;background:#e4e5e6;"></div>
<div class="a" style="left:369px;top:494.5px;width:1px;height:20.5px;background:rgba(200,200,205,0.45);"></div>
<div class="a" style="left:495px;top:494.5px;width:1px;height:20.5px;background:rgba(200,200,205,0.45);"></div>
<div class="a" style="left:770px;top:494.5px;width:1px;height:20.5px;background:rgba(200,200,205,0.45);"></div>
<div class="a" style="left:910px;top:494.5px;width:1px;height:20.5px;background:rgba(200,200,205,0.45);"></div>
<div class="a" style="left:993px;top:494.5px;width:1px;height:20.5px;background:rgba(200,200,205,0.45);"></div>
<div class="a" style="left:1111px;top:494.5px;width:1px;height:20.5px;background:rgba(200,200,205,0.45);"></div>
<div class="a" style="left:1252px;top:494.5px;width:1px;height:20.5px;background:rgba(200,200,205,0.45);"></div>
<div class="a" style="left:1327px;top:494.5px;width:1px;height:20.5px;background:rgba(200,200,205,0.45);"></div>
<svg class="a" style="left:196px;top:504.0px" width="6" height="4" viewBox="0 0 6 4"><path d="M0 0 L6 0 L3 3.2Z" fill="#5a5a5a"/></svg>
<div class="a" style="left:233.5px;top:499.41px;font-size:10.5px;line-height:10.5px;color:#45454c;">Lot Stock</div>
<div class="a" style="left:373.5px;top:499.41px;font-size:10.5px;line-height:10.5px;color:#45454c;">020323_C_M6</div>
<div class="a" style="left:499px;top:499.41px;font-size:10.5px;line-height:10.5px;color:#45454c;">Oeufs [Unités]</div>
<div class="a" style="left:774px;top:499.41px;font-size:10.5px;line-height:10.5px;color:#45454c;letter-spacing:0.18px;">03/03/2023</div>
<div class="a" style="left:914px;top:499.41px;font-size:10.5px;line-height:10.5px;color:#45454c;letter-spacing:0.18px;">16/03/2023</div>
<div class="a" style="left:995px;width:112px;text-align:right;top:499.41px;font-size:10.5px;line-height:10.5px;color:#45454c;">760,000</div>
<div class="a" style="left:1256.5px;top:499.41px;font-size:10.5px;line-height:10.5px;color:#45454c;">Unités</div>
<div class="a" style="left:1331.5px;top:499.41px;font-size:10.5px;line-height:10.5px;color:#45454c;">Matières Premières</div>
<div class="a" style="left:139px;top:515.0px;width:14.5px;height:20.5px;background:#f3f3f4;"></div>
<div class="a" style="left:139px;top:534.5px;width:14.5px;height:1px;background:#dfe0e1;"></div>
<div class="a" style="left:244px;top:515.0px;width:1330px;height:20.5px;background:linear-gradient(180deg,#f6fefe 0%,#e4fbfc 30%,#b2f3f7 62%,#84edf3 100%);"></div>
<div class="a" style="left:244px;top:534.5px;width:1330px;height:1px;background:rgba(255,255,255,0.5);"></div>
<div class="a" style="left:369px;top:515.0px;width:1px;height:20.5px;background:rgba(200,200,205,0.45);"></div>
<div class="a" style="left:495px;top:515.0px;width:1px;height:20.5px;background:rgba(200,200,205,0.45);"></div>
<div class="a" style="left:770px;top:515.0px;width:1px;height:20.5px;background:rgba(200,200,205,0.45);"></div>
<div class="a" style="left:910px;top:515.0px;width:1px;height:20.5px;background:rgba(200,200,205,0.45);"></div>
<div class="a" style="left:993px;top:515.0px;width:1px;height:20.5px;background:rgba(200,200,205,0.45);"></div>
<div class="a" style="left:1111px;top:515.0px;width:1px;height:20.5px;background:rgba(200,200,205,0.45);"></div>
<div class="a" style="left:1252px;top:515.0px;width:1px;height:20.5px;background:rgba(200,200,205,0.45);"></div>
<div class="a" style="left:1327px;top:515.0px;width:1px;height:20.5px;background:rgba(200,200,205,0.45);"></div>
<svg class="a" style="left:227px;top:517.0px" width="17" height="17" viewBox="0 0 17 17">
<path d="M8 1.5 L14.5 4.5 L14.5 12 L8 15.5 L1.5 12 L1.5 4.5Z" fill="#c9ced2"/>
<path d="M8 1.5 L14.5 4.5 L8 7.5 L1.5 4.5Z" fill="#e6e9eb"/>
<path d="M8 7.5 L14.5 4.5 L14.5 12 L8 15.5Z" fill="#aeb5ba"/>
<circle cx="13" cy="12.5" r="3.5" fill="#2fb07a"/><circle cx="13" cy="12.5" r="1.6" fill="#fff"/></svg>
<div class="a" style="left:251.5px;top:519.91px;font-size:10.5px;line-height:10.5px;color:#22505e;">Reception</div>
<div class="a" style="left:373.5px;top:519.91px;font-size:10.5px;line-height:10.5px;color:#22505e;">RE_230303_014</div>
<div class="a" style="left:499px;top:519.91px;font-size:10.5px;line-height:10.5px;color:#22505e;">Réception [MARAICHER D'ARGOAT]</div>
<div class="a" style="left:774px;top:519.91px;font-size:10.5px;line-height:10.5px;color:#22505e;letter-spacing:0.18px;">03/03/2023</div>
<div class="a" style="left:1113px;width:135px;text-align:right;top:519.91px;font-size:10.5px;line-height:10.5px;color:#22505e;">24 000,000</div>
<div class="a" style="left:1256.5px;top:519.91px;font-size:10.5px;line-height:10.5px;color:#22505e;">Unités</div>
<div class="a" style="left:1331.5px;top:519.91px;font-size:10.5px;line-height:10.5px;color:#22505e;">Matières Premières</div>
<div class="a" style="left:139px;top:535.5px;width:14.5px;height:20.5px;background:#f3f3f4;"></div>
<div class="a" style="left:139px;top:555.0px;width:14.5px;height:1px;background:#dfe0e1;"></div>
<div class="a" style="left:226px;top:535.5px;width:1348px;height:20.5px;background:#ffffff;"></div>
<div class="a" style="left:226px;top:555.0px;width:1348px;height:1px;background:#e9eaeb;"></div>
<div class="a" style="left:226px;top:535.5px;width:1px;height:20.5px;background:#e4e5e6;"></div>
<div class="a" style="left:369px;top:535.5px;width:1px;height:20.5px;background:rgba(200,200,205,0.45);"></div>
<div class="a" style="left:495px;top:535.5px;width:1px;height:20.5px;background:rgba(200,200,205,0.45);"></div>
<div class="a" style="left:770px;top:535.5px;width:1px;height:20.5px;background:rgba(200,200,205,0.45);"></div>
<div class="a" style="left:910px;top:535.5px;width:1px;height:20.5px;background:rgba(200,200,205,0.45);"></div>
<div class="a" style="left:993px;top:535.5px;width:1px;height:20.5px;background:rgba(200,200,205,0.45);"></div>
<div class="a" style="left:1111px;top:535.5px;width:1px;height:20.5px;background:rgba(200,200,205,0.45);"></div>
<div class="a" style="left:1252px;top:535.5px;width:1px;height:20.5px;background:rgba(200,200,205,0.45);"></div>
<div class="a" style="left:1327px;top:535.5px;width:1px;height:20.5px;background:rgba(200,200,205,0.45);"></div>
<svg class="a" style="left:196px;top:545.0px" width="6" height="4" viewBox="0 0 6 4"><path d="M0 0 L6 0 L3 3.2Z" fill="#5a5a5a"/></svg>
<div class="a" style="left:233.5px;top:540.41px;font-size:10.5px;line-height:10.5px;color:#45454c;">Lot Stock</div>
<div class="a" style="left:499px;top:540.41px;font-size:10.5px;line-height:10.5px;color:#45454c;">Eau [L]</div>
<div class="a" style="left:774px;top:540.41px;font-size:10.5px;line-height:10.5px;color:#45454c;letter-spacing:0.18px;">03/03/2023</div>
<div class="a" style="left:914px;top:540.41px;font-size:10.5px;line-height:10.5px;color:#45454c;letter-spacing:0.18px;">31/12/9999</div>
<div class="a" style="left:995px;width:112px;text-align:right;top:540.41px;font-size:10.5px;line-height:10.5px;color:#45454c;">57,000</div>
<div class="a" style="left:1256.5px;top:540.41px;font-size:10.5px;line-height:10.5px;color:#45454c;">L</div>
<div class="a" style="left:1331.5px;top:540.41px;font-size:10.5px;line-height:10.5px;color:#45454c;">Matières Premières</div>
<div class="a" style="left:139px;top:556.0px;width:14.5px;height:20.5px;background:#f3f3f4;"></div>
<div class="a" style="left:139px;top:575.5px;width:14.5px;height:1px;background:#dfe0e1;"></div>
<div class="a" style="left:244px;top:556.0px;width:1330px;height:20.5px;background:linear-gradient(180deg,#f6fefe 0%,#e4fbfc 30%,#b2f3f7 62%,#84edf3 100%);"></div>
<div class="a" style="left:244px;top:575.5px;width:1330px;height:1px;background:rgba(255,255,255,0.5);"></div>
<div class="a" style="left:369px;top:556.0px;width:1px;height:20.5px;background:rgba(200,200,205,0.45);"></div>
<div class="a" style="left:495px;top:556.0px;width:1px;height:20.5px;background:rgba(200,200,205,0.45);"></div>
<div class="a" style="left:770px;top:556.0px;width:1px;height:20.5px;background:rgba(200,200,205,0.45);"></div>
<div class="a" style="left:910px;top:556.0px;width:1px;height:20.5px;background:rgba(200,200,205,0.45);"></div>
<div class="a" style="left:993px;top:556.0px;width:1px;height:20.5px;background:rgba(200,200,205,0.45);"></div>
<div class="a" style="left:1111px;top:556.0px;width:1px;height:20.5px;background:rgba(200,200,205,0.45);"></div>
<div class="a" style="left:1252px;top:556.0px;width:1px;height:20.5px;background:rgba(200,200,205,0.45);"></div>
<div class="a" style="left:1327px;top:556.0px;width:1px;height:20.5px;background:rgba(200,200,205,0.45);"></div>
<svg class="a" style="left:227px;top:558.0px" width="17" height="17" viewBox="0 0 17 17">
<path d="M8 1.5 L14.5 4.5 L14.5 12 L8 15.5 L1.5 12 L1.5 4.5Z" fill="#c9ced2"/>
<path d="M8 1.5 L14.5 4.5 L8 7.5 L1.5 4.5Z" fill="#e6e9eb"/>
<path d="M8 7.5 L14.5 4.5 L14.5 12 L8 15.5Z" fill="#aeb5ba"/>
<circle cx="13" cy="12.5" r="3.5" fill="#2fb07a"/><circle cx="13" cy="12.5" r="1.6" fill="#fff"/></svg>
<div class="a" style="left:251.5px;top:560.91px;font-size:10.5px;line-height:10.5px;color:#22505e;">Reception</div>
<div class="a" style="left:373.5px;top:560.91px;font-size:10.5px;line-height:10.5px;color:#22505e;">RE_230307_001</div>
<div class="a" style="left:499px;top:560.91px;font-size:10.5px;line-height:10.5px;color:#22505e;">Réception [INTERNE]</div>
<div class="a" style="left:774px;top:560.91px;font-size:10.5px;line-height:10.5px;color:#22505e;letter-spacing:0.18px;">07/03/2023</div>
<div class="a" style="left:1113px;width:135px;text-align:right;top:560.91px;font-size:10.5px;line-height:10.5px;color:#22505e;">1 000 000,000</div>
<div class="a" style="left:1256.5px;top:560.91px;font-size:10.5px;line-height:10.5px;color:#22505e;">L</div>
<div class="a" style="left:1331.5px;top:560.91px;font-size:10.5px;line-height:10.5px;color:#22505e;">Matières Premières</div>
<div class="a" style="left:137px;top:629px;width:1437px;height:2px;background:#9c9fa2;"></div>
<div class="a" style="left:137px;top:631px;width:1437px;height:3px;background:linear-gradient(180deg,#c9cccf,#e4e6e8);"></div>
<div class="a" style="left:136px;top:634px;width:2px;height:260.5px;background:#d5d8da;"></div>
<div class="a" style="left:138px;top:634px;width:1436px;height:18px;background:linear-gradient(180deg,#f7f7f8,#ecedee);"></div>
<div class="a" style="left:138px;top:651px;width:1436px;height:1px;background:#d6d7d8;"></div>
<div class="a" style="left:153px;top:634px;width:1px;height:18px;background:#d9dadb;"></div>
<div class="a" style="left:307px;top:634px;width:1px;height:18px;background:#d9dadb;"></div>
<div class="a" style="left:479px;top:634px;width:1px;height:18px;background:#d9dadb;"></div>
<div class="a" style="left:624px;top:634px;width:1px;height:18px;background:#d9dadb;"></div>
<div class="a" style="left:786px;top:634px;width:1px;height:18px;background:#d9dadb;"></div>
<div class="a" style="left:1221px;top:634px;width:1px;height:18px;background:#d9dadb;"></div>
<div class="a" style="left:1390px;top:634px;width:1px;height:18px;background:#d9dadb;"></div>
<div class="a" style="left:157.5px;top:638.29px;font-size:11px;line-height:11px;color:#535353;">Type</div>
<div class="a" style="left:311.5px;top:638.29px;font-size:11px;line-height:11px;color:#535353;">Elément contrôlé</div>
<div class="a" style="left:483.5px;top:638.29px;font-size:11px;line-height:11px;color:#535353;">Article de l'élément</div>
<div class="a" style="left:628.5px;top:638.29px;font-size:11px;line-height:11px;color:#535353;">Date contrôle</div>
<div class="a" style="left:790.5px;top:638.29px;font-size:11px;line-height:11px;color:#535353;">Désignation contrôle</div>
<div class="a" style="left:1225.5px;top:638.29px;font-size:11px;line-height:11px;color:#535353;">Valeur contrôle</div>
<div class="a" style="left:1394.5px;top:638.29px;font-size:11px;line-height:11px;color:#535353;">Résultat contrôle</div>
<div class="a" style="left:153px;top:652px;width:1px;height:19px;background:#e3e4e5;"></div>
<div class="a" style="left:307px;top:652px;width:1px;height:19px;background:#e3e4e5;"></div>
<div class="a" style="left:479px;top:652px;width:1px;height:19px;background:#e3e4e5;"></div>
<div class="a" style="left:624px;top:652px;width:1px;height:19px;background:#e3e4e5;"></div>
<div class="a" style="left:786px;top:652px;width:1px;height:19px;background:#e3e4e5;"></div>
<div class="a" style="left:1221px;top:652px;width:1px;height:19px;background:#e3e4e5;"></div>
<div class="a" style="left:1390px;top:652px;width:1px;height:19px;background:#e3e4e5;"></div>
<div class="a" style="left:138px;top:652px;width:15px;height:19px;background:#f3f3f4;"></div>
<svg class="a" style="left:142px;top:659px" width="6" height="7" viewBox="0 0 6 7"><path d="M0 0 L6 0 L6 1.5 L3.8 3.5 L3.8 7 L2.2 7 L2.2 3.5 L0 1.5Z" fill="#333"/></svg>
<div class="a" style="left:138px;top:671px;width:1436px;height:3px;background:#dcdee0;"></div>
<div class="a" style="left:138px;top:674.5px;width:15px;height:18.8px;background:#f3f3f4;"></div>
<div class="a" style="left:138px;top:692.3px;width:15px;height:1px;background:#dfe0e1;"></div>
<div class="a" style="left:153px;top:674.5px;width:1421px;height:18.8px;background:linear-gradient(180deg,#f7fef6 0%,#edfbea 35%,#dbf7d7 65%,#cff4ca 100%);"></div>
<div class="a" style="left:153px;top:674.5px;width:1421px;height:1px;background:rgba(255,255,255,0.7);"></div>
<div class="a" style="left:307px;top:674.5px;width:1px;height:18.8px;background:rgba(200,205,200,0.45);"></div>
<div class="a" style="left:479px;top:674.5px;width:1px;height:18.8px;background:rgba(200,205,200,0.45);"></div>
<div class="a" style="left:624px;top:674.5px;width:1px;height:18.8px;background:rgba(200,205,200,0.45);"></div>
<div class="a" style="left:786px;top:674.5px;width:1px;height:18.8px;background:rgba(200,205,200,0.45);"></div>
<div class="a" style="left:1221px;top:674.5px;width:1px;height:18.8px;background:rgba(200,205,200,0.45);"></div>
<div class="a" style="left:1390px;top:674.5px;width:1px;height:18.8px;background:rgba(200,205,200,0.45);"></div>
<div class="a" style="left:157.5px;top:677.77px;font-size:11.5px;line-height:11.5px;color:#1f2329;font-weight:700;letter-spacing:0.08px;">Reception Fournisseur</div>
<div class="a" style="left:311.5px;top:677.77px;font-size:11.5px;line-height:11.5px;color:#1f2329;font-weight:700;letter-spacing:0.3px;">RE_200131_003</div>
<div class="a" style="left:483.5px;top:677.77px;font-size:11.5px;line-height:11.5px;color:#1f2329;font-weight:700;letter-spacing:0.08px;">Sel</div>
<div class="a" style="left:628.5px;top:677.77px;font-size:11.5px;line-height:11.5px;color:#1f2329;font-weight:700;letter-spacing:0.3px;">31<span style="display:inline-block;margin:0 1.6px;transform:scaleX(1.7)">/</span>01<span style="display:inline-block;margin:0 1.6px;transform:scaleX(1.7)">/</span>2020 15:30</div>
<div class="a" style="left:790.5px;top:677.77px;font-size:11.5px;line-height:11.5px;color:#1f2329;font-weight:700;letter-spacing:0.08px;">Propreté camion</div>
<div class="a" style="left:1225.5px;top:677.77px;font-size:11.5px;line-height:11.5px;color:#1f2329;font-weight:700;letter-spacing:0.08px;">OK</div>
<div class="a" style="left:1394.5px;top:677.77px;font-size:11.5px;line-height:11.5px;color:#1f2329;font-weight:700;letter-spacing:0.08px;">Conforme</div>
<svg class="a" style="left:143px;top:680.0px" width="6" height="8" viewBox="0 0 6 8"><path d="M1 0 L5 4 L1 8Z" fill="#222"/></svg>
<div class="a" style="left:138px;top:693.3px;width:15px;height:18.8px;background:#f3f3f4;"></div>
<div class="a" style="left:138px;top:711.0999999999999px;width:15px;height:1px;background:#dfe0e1;"></div>
<div class="a" style="left:153px;top:693.3px;width:1421px;height:18.8px;background:linear-gradient(180deg,#f7fef6 0%,#edfbea 35%,#dbf7d7 65%,#cff4ca 100%);"></div>
<div class="a" style="left:153px;top:693.3px;width:1421px;height:1px;background:rgba(255,255,255,0.7);"></div>
<div class="a" style="left:307px;top:693.3px;width:1px;height:18.8px;background:rgba(200,205,200,0.45);"></div>
<div class="a" style="left:479px;top:693.3px;width:1px;height:18.8px;background:rgba(200,205,200,0.45);"></div>
<div class="a" style="left:624px;top:693.3px;width:1px;height:18.8px;background:rgba(200,205,200,0.45);"></div>
<div class="a" style="left:786px;top:693.3px;width:1px;height:18.8px;background:rgba(200,205,200,0.45);"></div>
<div class="a" style="left:1221px;top:693.3px;width:1px;height:18.8px;background:rgba(200,205,200,0.45);"></div>
<div class="a" style="left:1390px;top:693.3px;width:1px;height:18.8px;background:rgba(200,205,200,0.45);"></div>
<div class="a" style="left:157.5px;top:696.71px;font-size:10.5px;line-height:10.5px;color:#424c4c;">Reception Fournisseur</div>
<div class="a" style="left:311.5px;top:696.71px;font-size:10.5px;line-height:10.5px;color:#424c4c;">RE_200131_003</div>
<div class="a" style="left:483.5px;top:696.71px;font-size:10.5px;line-height:10.5px;color:#424c4c;">Sel</div>
<div class="a" style="left:628.5px;top:696.71px;font-size:10.5px;line-height:10.5px;color:#424c4c;letter-spacing:0.27px;">31/01/2020 15:30</div>
<div class="a" style="left:790.5px;top:696.71px;font-size:10.5px;line-height:10.5px;color:#424c4c;">Température camion</div>
<div class="a" style="left:1225.5px;top:696.71px;font-size:10.5px;line-height:10.5px;color:#424c4c;">3</div>
<div class="a" style="left:1394.5px;top:696.71px;font-size:10.5px;line-height:10.5px;color:#424c4c;">Conforme</div>
<div class="a" style="left:138px;top:712.1px;width:15px;height:18.8px;background:#f3f3f4;"></div>
<div class="a" style="left:138px;top:729.9px;width:15px;height:1px;background:#dfe0e1;"></div>
<div class="a" style="left:153px;top:712.1px;width:1421px;height:18.8px;background:linear-gradient(180deg,#f7fef6 0%,#edfbea 35%,#dbf7d7 65%,#cff4ca 100%);"></div>
<div class="a" style="left:153px;top:712.1px;width:1421px;height:1px;background:rgba(255,255,255,0.7);"></div>
<div class="a" style="left:307px;top:712.1px;width:1px;height:18.8px;background:rgba(200,205,200,0.45);"></div>
<div class="a" style="left:479px;top:712.1px;width:1px;height:18.8px;background:rgba(200,205,200,0.45);"></div>
<div class="a" style="left:624px;top:712.1px;width:1px;height:18.8px;background:rgba(200,205,200,0.45);"></div>
<div class="a" style="left:786px;top:712.1px;width:1px;height:18.8px;background:rgba(200,205,200,0.45);"></div>
<div class="a" style="left:1221px;top:712.1px;width:1px;height:18.8px;background:rgba(200,205,200,0.45);"></div>
<div class="a" style="left:1390px;top:712.1px;width:1px;height:18.8px;background:rgba(200,205,200,0.45);"></div>
<div class="a" style="left:157.5px;top:715.51px;font-size:10.5px;line-height:10.5px;color:#424c4c;">Reception Fournisseur</div>
<div class="a" style="left:311.5px;top:715.51px;font-size:10.5px;line-height:10.5px;color:#424c4c;">RE_230303_012</div>
<div class="a" style="left:483.5px;top:715.51px;font-size:10.5px;line-height:10.5px;color:#424c4c;">Farine de blé noir</div>
<div class="a" style="left:628.5px;top:715.51px;font-size:10.5px;line-height:10.5px;color:#424c4c;letter-spacing:0.27px;">03/03/2023 12:01</div>
<div class="a" style="left:790.5px;top:715.51px;font-size:10.5px;line-height:10.5px;color:#424c4c;">Etiquetage des Matières</div>
<div class="a" style="left:1225.5px;top:715.51px;font-size:10.5px;line-height:10.5px;color:#424c4c;">OK</div>
<div class="a" style="left:1394.5px;top:715.51px;font-size:10.5px;line-height:10.5px;color:#424c4c;">Conforme</div>
<div class="a" style="left:138px;top:730.9px;width:15px;height:18.8px;background:#f3f3f4;"></div>
<div class="a" style="left:138px;top:748.6999999999999px;width:15px;height:1px;background:#dfe0e1;"></div>
<div class="a" style="left:153px;top:730.9px;width:1421px;height:18.8px;background:linear-gradient(180deg,#f7fef6 0%,#edfbea 35%,#dbf7d7 65%,#cff4ca 100%);"></div>
<div class="a" style="left:153px;top:730.9px;width:1421px;height:1px;background:rgba(255,255,255,0.7);"></div>
<div class="a" style="left:307px;top:730.9px;width:1px;height:18.8px;background:rgba(200,205,200,0.45);"></div>
<div class="a" style="left:479px;top:730.9px;width:1px;height:18.8px;background:rgba(200,205,200,0.45);"></div>
<div class="a" style="left:624px;top:730.9px;width:1px;height:18.8px;background:rgba(200,205,200,0.45);"></div>
<div class="a" style="left:786px;top:730.9px;width:1px;height:18.8px;background:rgba(200,205,200,0.45);"></div>
<div class="a" style="left:1221px;top:730.9px;width:1px;height:18.8px;background:rgba(200,205,200,0.45);"></div>
<div class="a" style="left:1390px;top:730.9px;width:1px;height:18.8px;background:rgba(200,205,200,0.45);"></div>
<div class="a" style="left:157.5px;top:734.31px;font-size:10.5px;line-height:10.5px;color:#424c4c;">Reception Fournisseur</div>
<div class="a" style="left:311.5px;top:734.31px;font-size:10.5px;line-height:10.5px;color:#424c4c;">RE_230303_012</div>
<div class="a" style="left:483.5px;top:734.31px;font-size:10.5px;line-height:10.5px;color:#424c4c;">Farine de blé noir</div>
<div class="a" style="left:628.5px;top:734.31px;font-size:10.5px;line-height:10.5px;color:#424c4c;letter-spacing:0.27px;">03/03/2023 12:01</div>
<div class="a" style="left:790.5px;top:734.31px;font-size:10.5px;line-height:10.5px;color:#424c4c;">Intégrité de l'emballage</div>
<div class="a" style="left:1225.5px;top:734.31px;font-size:10.5px;line-height:10.5px;color:#424c4c;">OK</div>
<div class="a" style="left:1394.5px;top:734.31px;font-size:10.5px;line-height:10.5px;color:#424c4c;">Conforme</div>
<div class="a" style="left:138px;top:749.7px;width:15px;height:18.8px;background:#f3f3f4;"></div>
<div class="a" style="left:138px;top:767.5px;width:15px;height:1px;background:#dfe0e1;"></div>
<div class="a" style="left:153px;top:749.7px;width:1421px;height:18.8px;background:linear-gradient(180deg,#f7fef6 0%,#edfbea 35%,#dbf7d7 65%,#cff4ca 100%);"></div>
<div class="a" style="left:153px;top:749.7px;width:1421px;height:1px;background:rgba(255,255,255,0.7);"></div>
<div class="a" style="left:307px;top:749.7px;width:1px;height:18.8px;background:rgba(200,205,200,0.45);"></div>
<div class="a" style="left:479px;top:749.7px;width:1px;height:18.8px;background:rgba(200,205,200,0.45);"></div>
<div class="a" style="left:624px;top:749.7px;width:1px;height:18.8px;background:rgba(200,205,200,0.45);"></div>
<div class="a" style="left:786px;top:749.7px;width:1px;height:18.8px;background:rgba(200,205,200,0.45);"></div>
<div class="a" style="left:1221px;top:749.7px;width:1px;height:18.8px;background:rgba(200,205,200,0.45);"></div>
<div class="a" style="left:1390px;top:749.7px;width:1px;height:18.8px;background:rgba(200,205,200,0.45);"></div>
<div class="a" style="left:157.5px;top:753.11px;font-size:10.5px;line-height:10.5px;color:#424c4c;">Reception Fournisseur</div>
<div class="a" style="left:311.5px;top:753.11px;font-size:10.5px;line-height:10.5px;color:#424c4c;">RE_230303_012</div>
<div class="a" style="left:483.5px;top:753.11px;font-size:10.5px;line-height:10.5px;color:#424c4c;">Farine de blé noir</div>
<div class="a" style="left:628.5px;top:753.11px;font-size:10.5px;line-height:10.5px;color:#424c4c;letter-spacing:0.27px;">03/03/2023 12:01</div>
<div class="a" style="left:790.5px;top:753.11px;font-size:10.5px;line-height:10.5px;color:#424c4c;">Propreté camion</div>
<div class="a" style="left:1225.5px;top:753.11px;font-size:10.5px;line-height:10.5px;color:#424c4c;">OK</div>
<div class="a" style="left:1394.5px;top:753.11px;font-size:10.5px;line-height:10.5px;color:#424c4c;">Conforme</div>
<div class="a" style="left:138px;top:768.5px;width:15px;height:18.8px;background:#f3f3f4;"></div>
<div class="a" style="left:138px;top:786.3px;width:15px;height:1px;background:#dfe0e1;"></div>
<div class="a" style="left:153px;top:768.5px;width:1421px;height:18.8px;background:linear-gradient(180deg,#f7fef6 0%,#edfbea 35%,#dbf7d7 65%,#cff4ca 100%);"></div>
<div class="a" style="left:153px;top:768.5px;width:1421px;height:1px;background:rgba(255,255,255,0.7);"></div>
<div class="a" style="left:307px;top:768.5px;width:1px;height:18.8px;background:rgba(200,205,200,0.45);"></div>
<div class="a" style="left:479px;top:768.5px;width:1px;height:18.8px;background:rgba(200,205,200,0.45);"></div>
<div class="a" style="left:624px;top:768.5px;width:1px;height:18.8px;background:rgba(200,205,200,0.45);"></div>
<div class="a" style="left:786px;top:768.5px;width:1px;height:18.8px;background:rgba(200,205,200,0.45);"></div>
<div class="a" style="left:1221px;top:768.5px;width:1px;height:18.8px;background:rgba(200,205,200,0.45);"></div>
<div class="a" style="left:1390px;top:768.5px;width:1px;height:18.8px;background:rgba(200,205,200,0.45);"></div>
<div class="a" style="left:157.5px;top:771.91px;font-size:10.5px;line-height:10.5px;color:#424c4c;">Reception Fournisseur</div>
<div class="a" style="left:311.5px;top:771.91px;font-size:10.5px;line-height:10.5px;color:#424c4c;">RE_230303_012</div>
<div class="a" style="left:483.5px;top:771.91px;font-size:10.5px;line-height:10.5px;color:#424c4c;">Farine de blé noir</div>
<div class="a" style="left:628.5px;top:771.91px;font-size:10.5px;line-height:10.5px;color:#424c4c;letter-spacing:0.27px;">03/03/2023 12:01</div>
<div class="a" style="left:790.5px;top:771.91px;font-size:10.5px;line-height:10.5px;color:#424c4c;">Température camion</div>
<div class="a" style="left:1225.5px;top:771.91px;font-size:10.5px;line-height:10.5px;color:#424c4c;">2</div>
<div class="a" style="left:1394.5px;top:771.91px;font-size:10.5px;line-height:10.5px;color:#424c4c;">Conforme</div>
<div class="a" style="left:138px;top:787.3px;width:15px;height:18.8px;background:#f3f3f4;"></div>
<div class="a" style="left:138px;top:805.0999999999999px;width:15px;height:1px;background:#dfe0e1;"></div>
<div class="a" style="left:153px;top:787.3px;width:1421px;height:18.8px;background:linear-gradient(180deg,#f7fef6 0%,#edfbea 35%,#dbf7d7 65%,#cff4ca 100%);"></div>
<div class="a" style="left:153px;top:787.3px;width:1421px;height:1px;background:rgba(255,255,255,0.7);"></div>
<div class="a" style="left:307px;top:787.3px;width:1px;height:18.8px;background:rgba(200,205,200,0.45);"></div>
<div class="a" style="left:479px;top:787.3px;width:1px;height:18.8px;background:rgba(200,205,200,0.45);"></div>
<div class="a" style="left:624px;top:787.3px;width:1px;height:18.8px;background:rgba(200,205,200,0.45);"></div>
<div class="a" style="left:786px;top:787.3px;width:1px;height:18.8px;background:rgba(200,205,200,0.45);"></div>
<div class="a" style="left:1221px;top:787.3px;width:1px;height:18.8px;background:rgba(200,205,200,0.45);"></div>
<div class="a" style="left:1390px;top:787.3px;width:1px;height:18.8px;background:rgba(200,205,200,0.45);"></div>
<div class="a" style="left:157.5px;top:790.71px;font-size:10.5px;line-height:10.5px;color:#424c4c;">Reception Fournisseur</div>
<div class="a" style="left:311.5px;top:790.71px;font-size:10.5px;line-height:10.5px;color:#424c4c;">RE_230303_014</div>
<div class="a" style="left:483.5px;top:790.71px;font-size:10.5px;line-height:10.5px;color:#424c4c;">Oeufs</div>
<div class="a" style="left:628.5px;top:790.71px;font-size:10.5px;line-height:10.5px;color:#424c4c;letter-spacing:0.27px;">03/03/2023 12:22</div>
<div class="a" style="left:790.5px;top:790.71px;font-size:10.5px;line-height:10.5px;color:#424c4c;">Etiquetage des Matières</div>
<div class="a" style="left:1225.5px;top:790.71px;font-size:10.5px;line-height:10.5px;color:#424c4c;">OK</div>
<div class="a" style="left:1394.5px;top:790.71px;font-size:10.5px;line-height:10.5px;color:#424c4c;">Conforme</div>
<div class="a" style="left:138px;top:806.1px;width:15px;height:18.8px;background:#f3f3f4;"></div>
<div class="a" style="left:138px;top:823.9px;width:15px;height:1px;background:#dfe0e1;"></div>
<div class="a" style="left:153px;top:806.1px;width:1421px;height:18.8px;background:linear-gradient(180deg,#f7fef6 0%,#edfbea 35%,#dbf7d7 65%,#cff4ca 100%);"></div>
<div class="a" style="left:153px;top:806.1px;width:1421px;height:1px;background:rgba(255,255,255,0.7);"></div>
<div class="a" style="left:307px;top:806.1px;width:1px;height:18.8px;background:rgba(200,205,200,0.45);"></div>
<div class="a" style="left:479px;top:806.1px;width:1px;height:18.8px;background:rgba(200,205,200,0.45);"></div>
<div class="a" style="left:624px;top:806.1px;width:1px;height:18.8px;background:rgba(200,205,200,0.45);"></div>
<div class="a" style="left:786px;top:806.1px;width:1px;height:18.8px;background:rgba(200,205,200,0.45);"></div>
<div class="a" style="left:1221px;top:806.1px;width:1px;height:18.8px;background:rgba(200,205,200,0.45);"></div>
<div class="a" style="left:1390px;top:806.1px;width:1px;height:18.8px;background:rgba(200,205,200,0.45);"></div>
<div class="a" style="left:157.5px;top:809.51px;font-size:10.5px;line-height:10.5px;color:#424c4c;">Reception Fournisseur</div>
<div class="a" style="left:311.5px;top:809.51px;font-size:10.5px;line-height:10.5px;color:#424c4c;">RE_230303_014</div>
<div class="a" style="left:483.5px;top:809.51px;font-size:10.5px;line-height:10.5px;color:#424c4c;">Oeufs</div>
<div class="a" style="left:628.5px;top:809.51px;font-size:10.5px;line-height:10.5px;color:#424c4c;letter-spacing:0.27px;">03/03/2023 12:22</div>
<div class="a" style="left:790.5px;top:809.51px;font-size:10.5px;line-height:10.5px;color:#424c4c;">Intégrité de l'emballage</div>
<div class="a" style="left:1225.5px;top:809.51px;font-size:10.5px;line-height:10.5px;color:#424c4c;">OK</div>
<div class="a" style="left:1394.5px;top:809.51px;font-size:10.5px;line-height:10.5px;color:#424c4c;">Conforme</div>
<div class="a" style="left:138px;top:824.9px;width:15px;height:18.8px;background:#f3f3f4;"></div>
<div class="a" style="left:138px;top:842.6999999999999px;width:15px;height:1px;background:#dfe0e1;"></div>
<div class="a" style="left:153px;top:824.9px;width:1421px;height:18.8px;background:linear-gradient(180deg,#f7fef6 0%,#edfbea 35%,#dbf7d7 65%,#cff4ca 100%);"></div>
<div class="a" style="left:153px;top:824.9px;width:1421px;height:1px;background:rgba(255,255,255,0.7);"></div>
<div class="a" style="left:307px;top:824.9px;width:1px;height:18.8px;background:rgba(200,205,200,0.45);"></div>
<div class="a" style="left:479px;top:824.9px;width:1px;height:18.8px;background:rgba(200,205,200,0.45);"></div>
<div class="a" style="left:624px;top:824.9px;width:1px;height:18.8px;background:rgba(200,205,200,0.45);"></div>
<div class="a" style="left:786px;top:824.9px;width:1px;height:18.8px;background:rgba(200,205,200,0.45);"></div>
<div class="a" style="left:1221px;top:824.9px;width:1px;height:18.8px;background:rgba(200,205,200,0.45);"></div>
<div class="a" style="left:1390px;top:824.9px;width:1px;height:18.8px;background:rgba(200,205,200,0.45);"></div>
<div class="a" style="left:157.5px;top:828.31px;font-size:10.5px;line-height:10.5px;color:#424c4c;">Reception Fournisseur</div>
<div class="a" style="left:311.5px;top:828.31px;font-size:10.5px;line-height:10.5px;color:#424c4c;">RE_230303_014</div>
<div class="a" style="left:483.5px;top:828.31px;font-size:10.5px;line-height:10.5px;color:#424c4c;">Oeufs</div>
<div class="a" style="left:628.5px;top:828.31px;font-size:10.5px;line-height:10.5px;color:#424c4c;letter-spacing:0.27px;">03/03/2023 12:22</div>
<div class="a" style="left:790.5px;top:828.31px;font-size:10.5px;line-height:10.5px;color:#424c4c;">Propreté camion</div>
<div class="a" style="left:1225.5px;top:828.31px;font-size:10.5px;line-height:10.5px;color:#424c4c;">OK</div>
<div class="a" style="left:1394.5px;top:828.31px;font-size:10.5px;line-height:10.5px;color:#424c4c;">Conforme</div>
<div class="a" style="left:138px;top:843.7px;width:15px;height:18.8px;background:#f3f3f4;"></div>
<div class="a" style="left:138px;top:861.5px;width:15px;height:1px;background:#dfe0e1;"></div>
<div class="a" style="left:153px;top:843.7px;width:1421px;height:18.8px;background:linear-gradient(180deg,#f7fef6 0%,#edfbea 35%,#dbf7d7 65%,#cff4ca 100%);"></div>
<div class="a" style="left:153px;top:843.7px;width:1421px;height:1px;background:rgba(255,255,255,0.7);"></div>
<div class="a" style="left:307px;top:843.7px;width:1px;height:18.8px;background:rgba(200,205,200,0.45);"></div>
<div class="a" style="left:479px;top:843.7px;width:1px;height:18.8px;background:rgba(200,205,200,0.45);"></div>
<div class="a" style="left:624px;top:843.7px;width:1px;height:18.8px;background:rgba(200,205,200,0.45);"></div>
<div class="a" style="left:786px;top:843.7px;width:1px;height:18.8px;background:rgba(200,205,200,0.45);"></div>
<div class="a" style="left:1221px;top:843.7px;width:1px;height:18.8px;background:rgba(200,205,200,0.45);"></div>
<div class="a" style="left:1390px;top:843.7px;width:1px;height:18.8px;background:rgba(200,205,200,0.45);"></div>
<div class="a" style="left:157.5px;top:847.11px;font-size:10.5px;line-height:10.5px;color:#424c4c;">Reception Fournisseur</div>
<div class="a" style="left:311.5px;top:847.11px;font-size:10.5px;line-height:10.5px;color:#424c4c;">RE_230303_014</div>
<div class="a" style="left:483.5px;top:847.11px;font-size:10.5px;line-height:10.5px;color:#424c4c;">Oeufs</div>
<div class="a" style="left:628.5px;top:847.11px;font-size:10.5px;line-height:10.5px;color:#424c4c;letter-spacing:0.27px;">03/03/2023 12:22</div>
<div class="a" style="left:790.5px;top:847.11px;font-size:10.5px;line-height:10.5px;color:#424c4c;">Température camion</div>
<div class="a" style="left:1225.5px;top:847.11px;font-size:10.5px;line-height:10.5px;color:#424c4c;">1</div>
<div class="a" style="left:1394.5px;top:847.11px;font-size:10.5px;line-height:10.5px;color:#424c4c;">Conforme</div>
<div class="a" style="left:1571px;top:634px;width:1px;height:260.5px;background:#d6d8da;"></div>
<!-- Menu LINA -->
<div class="a" style="left:45px;top:901px;width:241px;height:43px;background:#ffc002;border-radius:22px"></div>
<div class="a" style="left:117.5px;top:910.5px;font-size:18.4px;font-weight:bold;color:#1b385a;line-height:20px">Menu LINA</div>

<!-- bottom strips -->
<div class="a" style="left:0;top:946px;width:1700px;height:3px;background:linear-gradient(180deg,#6fa9cf 0%,#b2e1fb 30%,#b2e1fb 70%,#6f9fc4 100%)"></div>
<div class="a" style="left:0;top:949px;width:1700px;height:7px;background:linear-gradient(180deg,#336f9c 0px,#2f7aab 2px,#2f7aab 4.5px,#1d5478 5.5px,#143e5c 7px)"></div>

<!-- teamviewer widget -->
<svg class="a" style="left:1672px;top:884px" width="28" height="56" viewBox="0 0 28 56">
 <path d="M2 4 Q2 2 5 2 L27 2 L27 54 L2 40Z" fill="#6b6869"/>
 <rect x="5" y="7.5" width="21" height="21" fill="#1b4f80"/>
 <circle cx="15.5" cy="18" r="8" fill="#6f7580"/>
 <path d="M9 18 L22 18" stroke="#1b2f48" stroke-width="2.4"/>
 <path d="M9 18 L12 15.5 M9 18 L12 20.5 M22 18 L19 15.5 M22 18 L19 20.5" stroke="#1b2f48" stroke-width="1.6"/>
</svg>
</body></html>
